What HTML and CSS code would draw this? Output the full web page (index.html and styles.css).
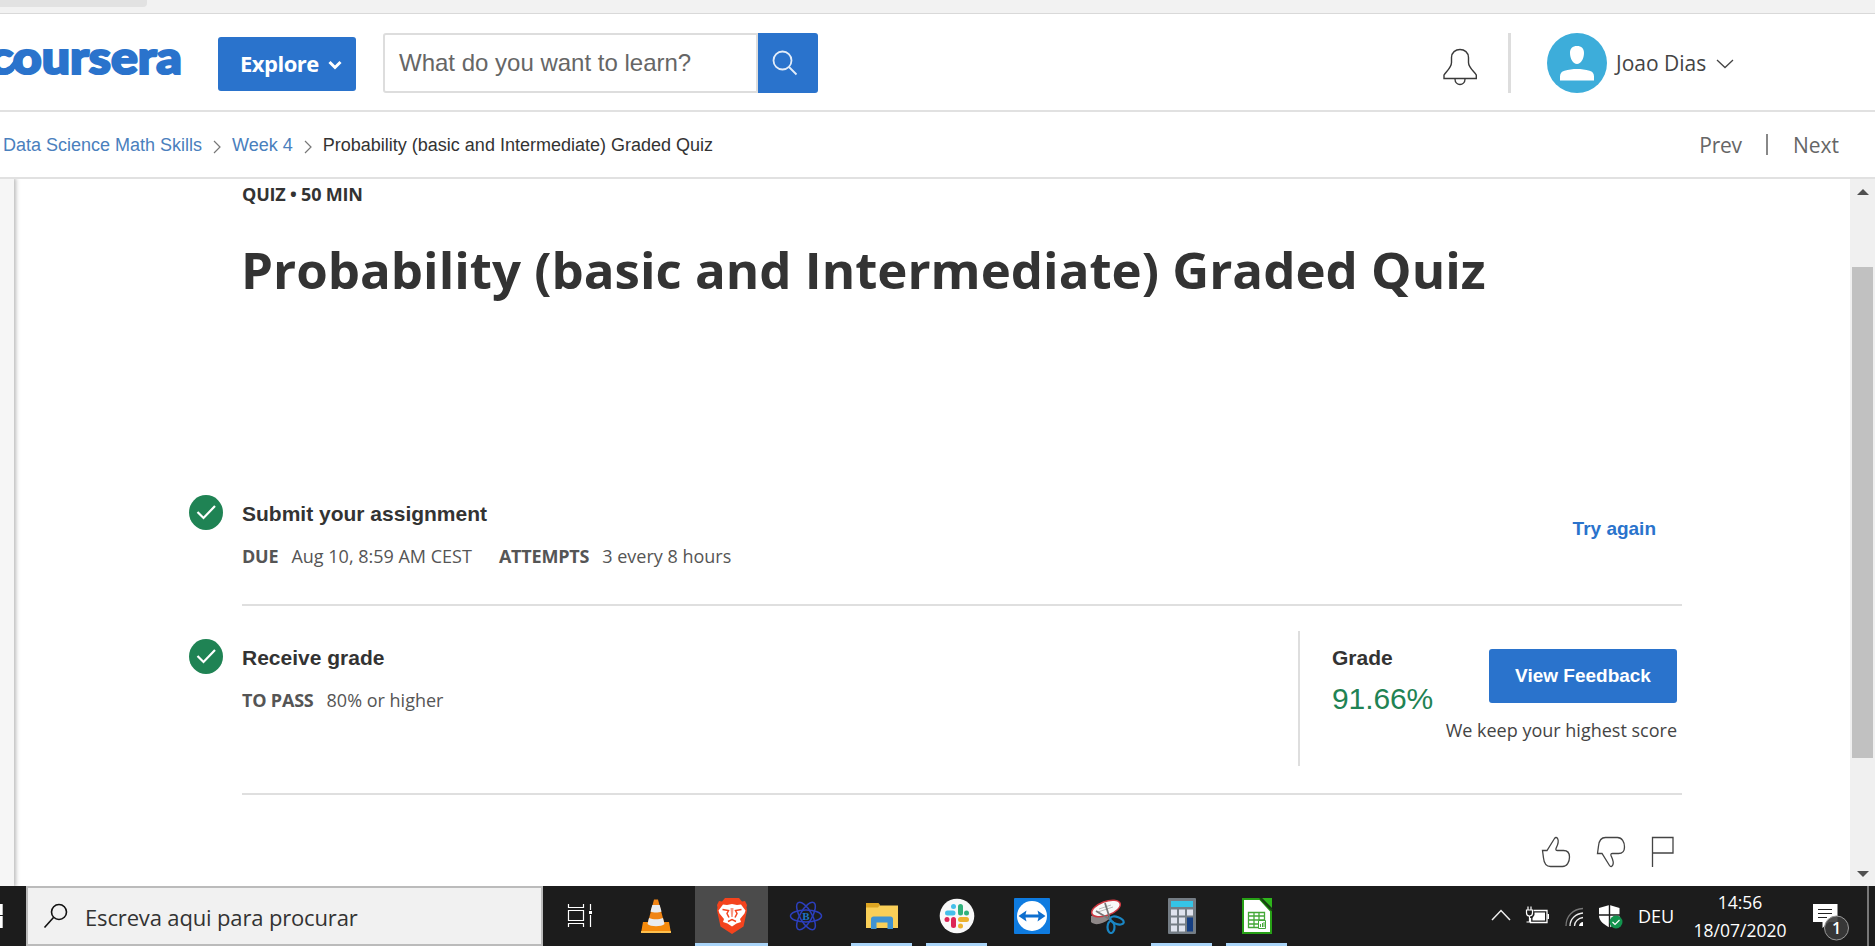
FILE: index.html
```html
<!DOCTYPE html>
<html lang="en">
<head>
<meta charset="utf-8">
<title>Probability (basic and Intermediate) Graded Quiz</title>
<link rel="stylesheet" href="styles.css">
</head>
<body>
<div class="screen">
  <div class="tabstrip"><div class="tab"></div></div>

  <header class="header">
    <svg class="logo" width="182" height="40" viewBox="0 0 182 40">
      <text class="logo-text" x="-11" y="32" textLength="193" lengthAdjust="spacingAndGlyphs">coursera</text>
      <path d="M6 30C14 28 18 13 28 9.500" fill="none" stroke="#2a73cc" stroke-width="6"/>
    </svg>
    <button class="explore">Explore
      <svg width="14" height="10" viewBox="0 0 14 10"><path d="M1.500 2l5.500 5.500L12.500 2" fill="none" stroke="#fff" stroke-width="3"/></svg>
    </button>
    <div class="search">
      <div class="search-field">What do you want to learn?</div>
      <div class="search-button">
        <svg width="26" height="26" viewBox="0 0 26 26" fill="none" stroke="#e3edf9" stroke-width="1.800"><circle cx="10.500" cy="10.500" r="9"/><path d="M17 17l7.500 7.500"/></svg>
      </div>
    </div>
    <svg class="bell" width="36" height="38" viewBox="0 0 36 38" fill="none" stroke="#3a3a3a" stroke-width="1.400"><path d="M2 30.500V27c1.500-3 7.500-7 7.500-12.500V9.500c0-5 4-8 8.500-8s8.500 3 8.500 8v5C26.500 20 33 24 34.300 27v3.500z"/><path d="M13 31c0 3.500 2.500 5.500 5 5.500s5-2 5-5.500"/></svg>
    <div class="header-rule"></div>
    <svg class="avatar" width="60" height="60" viewBox="0 0 60 60"><circle cx="30" cy="30" r="30" fill="#3dadda"/><path d="M30 13c4.500 0 7 2.200 7 7 0 5.500-3 11-7 11s-7-5.500-7-11c0-4.800 2.500-7 7-7zM13 47.500v-4c0-3 1.500-5 4.500-5.800 8-2.200 17-2.200 25 0 3 .8 4.500 2.800 4.500 5.800v4z" fill="#fff"/></svg>
    <span class="user-name">Joao Dias</span>
    <svg class="user-caret" width="18" height="10" viewBox="0 0 18 10"><path d="M1 1l8 7.500L17 1" fill="none" stroke="#444" stroke-width="1.300"/></svg>
  </header>

  <nav class="crumbs">
    <a class="crumb">Data Science Math Skills</a>
    <svg class="sep" width="8" height="14" viewBox="0 0 8 14"><path d="M1 1l6 6-6 6" fill="none" stroke="#777" stroke-width="1.200"/></svg>
    <a class="crumb">Week 4</a>
    <svg class="sep" width="8" height="14" viewBox="0 0 8 14"><path d="M1 1l6 6-6 6" fill="none" stroke="#777" stroke-width="1.200"/></svg>
    <span class="crumb crumb-current">Probability (basic and Intermediate) Graded Quiz</span>
    <div class="pager"><span class="prev">Prev</span><i class="pager-rule"></i><span>Next</span></div>
  </nav>

  <div class="body">
    <aside class="rail"></aside>
    <main class="content">
      <div class="kicker">QUIZ • 50 MIN</div>
      <h1 class="title">Probability (basic and Intermediate) Graded Quiz</h1>

      <section class="step step-submit">
        <svg class="check" width="34" height="35" viewBox="0 0 34 35"><ellipse cx="17" cy="17.500" rx="17" ry="17.500" fill="#1f8354"/><path d="M8.500 17l6 6L26 11" fill="none" stroke="#fff" stroke-width="2.200"/></svg>
        <div class="step-body">
          <div class="step-text">
            <h2 class="step-title step-title-submit">Submit your assignment</h2>
            <div class="meta"><b class="due">DUE</b><span class="due-date">Aug 10, 8:59 AM CEST</span><b class="attempts">ATTEMPTS</b><span>3 every 8 hours</span></div>
          </div>
          <a class="try-again">Try again</a>
        </div>
      </section>

      <section class="step step-grade">
        <svg class="check" width="34" height="35" viewBox="0 0 34 35"><ellipse cx="17" cy="17.500" rx="17" ry="17.500" fill="#1f8354"/><path d="M8.500 17l6 6L26 11" fill="none" stroke="#fff" stroke-width="2.200"/></svg>
        <div class="step-body">
          <div class="step-text">
            <h2 class="step-title">Receive grade</h2>
            <div class="meta"><b class="to-pass">TO PASS</b><span>80% or higher</span></div>
          </div>
          <div class="grade">
            <div class="grade-score"><div class="grade-label">Grade</div><div class="grade-value">91.66%</div></div>
            <div class="grade-action"><button class="feedback">View Feedback</button><div class="note">We keep your highest score</div></div>
          </div>
        </div>
      </section>

      <div class="reactions">
        <svg width="30" height="32" viewBox="0 0 30 32"><path d="M1.500 14.500H6L13.500 2.500C14.500 1 16 1.200 16.800 3c1.500 3.500-1 7.500-1.800 9.500-.4 1.500.2 2 1.500 2h6c4 0 6 2.500 6 6.500 0 5-2.500 9.500-7 9.500H9.500C4.500 30.500 3 27 2.500 22z"/></svg>
        <svg width="30" height="32" viewBox="0 0 30 32"><path d="M1.500 17.500H6L13.500 29.500c1 1.500 2.500 1.300 3.300-.5 1.500-3.500-1-7.500-1.800-9.500-.4-1.500.2-2 1.500-2h6c4 0 6-2.500 6-6.500 0-5-2.500-9.500-7-9.500H9.500C4.500 1.500 3 5 2.500 10z"/></svg>
        <svg width="24" height="32" viewBox="0 0 24 32"><path d="M1.500 31V1.500h20.500V17H1.500"/></svg>
      </div>
    </main>
    <div class="scrollbar">
      <i class="arrow-up"></i><div class="thumb"></div><i class="arrow-down"></i>
    </div>
  </div>

  <footer class="taskbar">
    <svg class="start" width="25" height="60" viewBox="0 0 25 60"><path d="M0 18h2.700v11H0zM0 30h2.700v12H0z" fill="#fff"/></svg>
    <div class="task-search">
      <svg width="26" height="26" viewBox="0 0 26 26" fill="none" stroke="#111" stroke-width="1.600"><circle cx="16" cy="9" r="7.500"/><path d="M10.500 14.500L1.500 24.500"/></svg>
      <span>Escreva aqui para procurar</span>
    </div>
    <div class="apps">
      <div class="app app-view"><svg width="36" height="36" viewBox="0 0 36 36"><path d="M6.500 6v3.500h15V6M6.500 29v-3.500h15V29M6.500 12.500h15v10h-15zM28.500 6v6M28.500 17v12" fill="none" stroke="#fff" stroke-width="1.200"/><path d="M27 13h3v3h-3z" fill="#fff"/></svg></div>
      <div class="app app-player"><svg width="36" height="36" viewBox="0 0 36 36"><path d="M5 24h26l2 11H3z" fill="#f58a0b"/><path d="M3 33h30v2H3z" fill="#ffc04d"/><path d="M16 1.500h4L26.500 26c-3 3-14 3-17 0z" fill="#f08414"/><path d="M14.300 7h7.400l1.800 6.500c-3 1.300-8 1.300-11 0zM11 20c4 1.800 10 1.800 14 0l1.500 6c-3 3-14 3-17 0z" fill="#e9ebee"/></svg></div>
      <div class="app active"><svg width="36" height="36" viewBox="0 0 36 36"><path d="M11 0h14l3 3.500 3-.5 2 4-.5 2.500.5 3-3.500 16L18 36 6.500 28.500 3 12.500l.5-3L3 7l2-4 3 .5z" fill="#f4431d"/><path d="M9 6.500l4 .5 5-1 5 1 4-.5 4.500 6-1 3-4.500 5.500 1 3-4.500 1.500L18 28.500 13.500 25.500 9 24l1-3L5.500 15.500l-1-3z" fill="#fff"/><path d="M8.500 11.500l6 1-1.500 3 2 4M27.500 11.500l-6 1 1.500 3-2 4M14 23.500l4-2 4 2" fill="none" stroke="#f4431d" stroke-width="1.500"/><path d="M16.500 10h3l-.7 9h-1.600z" fill="#f4431d" opacity=".55"/></svg></div>
      <div class="app app-atom"><svg width="36" height="36" viewBox="0 0 36 36" fill="none" stroke="#2c3fbd" stroke-width="1.500"><ellipse cx="18" cy="18" rx="15.500" ry="6"/><ellipse cx="18" cy="18" rx="15.500" ry="6" transform="rotate(60 18 18)"/><ellipse cx="18" cy="18" rx="15.500" ry="6" transform="rotate(120 18 18)"/><text class="atom-letter" x="18" y="22" text-anchor="middle">B</text></svg></div>
      <div class="app open"><svg width="36" height="36" viewBox="0 0 36 36"><path d="M2 5.500h12l2 2H34v22.500H2z" fill="#f9cf58"/><path d="M2 5h12.500L16 7l-2 2.500H2z" fill="#dda522"/><path d="M7 31V21c0-1.500 1-2.500 2.500-2.500h17c1.500 0 2.500 1 2.500 2.500v10h-5.500v-6.500h-11V31z" fill="#3f93d2"/></svg></div>
      <div class="app open"><svg width="36" height="36" viewBox="0 0 36 36"><circle cx="18" cy="18" r="17.300" fill="#f8f8f8"/><g stroke-width="5" stroke-linecap="round"><path d="M8.500 15H14" stroke="#45bfea"/><path d="M21.500 8.500V15" stroke="#30b27c"/><path d="M21.500 21.500H27.500" stroke="#ecb22e"/><path d="M14.500 21.500v6" stroke="#dd2556"/></g><circle cx="14.500" cy="8.500" r="2.500" fill="#45bfea"/><circle cx="27.500" cy="15" r="2.500" fill="#30b27c"/><circle cx="21.500" cy="28" r="2.500" fill="#ecb22e"/><circle cx="8" cy="21.500" r="2.500" fill="#dd2556"/></svg></div>
      <div class="app"><svg width="36" height="36" viewBox="0 0 36 36"><rect width="36" height="36" rx="1" fill="#0e7be0"/><circle cx="18" cy="18" r="15" fill="#fff"/><path d="M4.500 18l8-5.500-1 4h13l-1-4 8 5.500-8 5.500 1-4h-13l1 4z" fill="#0e6fcf"/></svg></div>
      <div class="app"><svg width="36" height="36" viewBox="0 0 36 36"><path d="M2 18v6c4 4 12 2 18-3l-2-7z" fill="#8e8888"/><ellipse cx="17" cy="10.500" rx="15" ry="7" transform="rotate(-20 17 10.500)" fill="#f8f8f8" stroke="#ce3841" stroke-width="1.500"/><path d="M10 11l12-4M9 14l15-5" stroke="#bbb"/><path d="M16 5l5 16M7 13l15 9" stroke="#777" stroke-width="1.800"/><g fill="none" stroke="#1a86c4" stroke-width="2.200"><ellipse cx="28" cy="22.500" rx="7" ry="3.500" transform="rotate(20 28 22.500)"/><ellipse cx="22" cy="29" rx="3.500" ry="6"/></g></svg></div>
      <div class="app open"><svg width="36" height="36" viewBox="0 0 36 36"><rect x="4" width="28" height="36" rx="1" fill="#747d85"/><path d="M7 3h22v6H7z" fill="#35c4e6"/><path d="M7 11.500h6v6H7zM15 11.500h6v6h-6zM23 11.500h6v6h-6zM7 19.500h6v6H7zM15 19.500h6v6h-6zM7 27.500h6v6H7zM15 27.500h6v6h-6z" fill="#dfe3ee"/><path d="M23 19.500h6v14h-6z" fill="#153f83"/></svg></div>
      <div class="app open"><svg width="36" height="36" viewBox="0 0 36 36"><path d="M4 1h17l11 12v22H4z" fill="#fff" stroke="#27a016" stroke-width="2"/><path d="M23 0h10v10z" fill="#2eb51b"/><path d="M21 0l12 12.500" stroke="#154d0d" stroke-width="2"/><path d="M9.500 14.500h16v15h-16zM9.500 18h16M9.500 22h16M9.500 26h16M15 14.500v15M20 14.500v15" fill="none" stroke="#43a736" stroke-width="1.300"/><path d="M19.500 22.500h7v8h-7z" fill="#fff" stroke="#43a736"/><path d="M21.500 29v-3M23.500 29v-4M25 29v-5" stroke="#43a736"/></svg></div>
    </div>
    <div class="tray">
      <svg class="tray-up" width="20" height="12" viewBox="0 0 20 12"><path d="M1 11l9-9.500L19 11" fill="none" stroke="#eee" stroke-width="1.500"/></svg>
      <svg class="tray-power" width="25" height="20" viewBox="0 0 25 20"><path d="M8.500 4.500H22v12H5.500V12" fill="none" stroke="#fff" stroke-width="1.300"/><path d="M9.500 6.500h10.500v8H7.500V12l2-3zM22.500 8H24v5h-1.500z" fill="#fff"/><path d="M1.500 4h6v3c0 2-1 3-3 3s-3-1-3-3zM3 4V.5M6 4V.5M4.500 10v6h-3" fill="#1c1c1c" stroke="#fff" stroke-width="1.200"/></svg>
      <svg class="tray-net" width="20" height="20" viewBox="0 0 20 20" fill="none" stroke="#eee" stroke-width="1.300"><path d="M1 19C1 9 8 2 18 1.500" stroke="#777"/><path d="M5 19C5 12 11 6.500 18 6"/><path d="M9.500 19c0-4.500 4-8 8.500-8.500"/><path d="M14 19c0-2 2-4 4-4v4z" fill="#fff" stroke="none"/></svg>
      <svg class="tray-shield" width="25" height="25" viewBox="0 0 25 25"><path d="M11.500 1l10 3v8c0 5-5 9-10 11.500C6.500 21 1 17 1 12V4z" fill="#fff"/><path d="M11.500 0v24M1 11h21" stroke="#1c1c1c" stroke-width="1.400"/><circle cx="18" cy="18" r="6.500" fill="#12944e"/><path d="M14.500 18l2.500 2.500 4.500-4.500" fill="none" stroke="#fff" stroke-width="1.200"/></svg>
      <span class="lang">DEU</span>
      <div class="clock"><span class="time">14:56</span><span class="date">18/07/2020</span></div>
      <svg class="notify" width="38" height="38" viewBox="0 0 38 38"><path d="M1 1h24.500v18H17l-6.500 6v-6H1z" fill="#fff"/><path d="M6 6.500h14M6 10.500h14M6 14.500h9" stroke="#222" stroke-width="1.200"/><circle cx="24.500" cy="25" r="12" fill="#3b3b3b" fill-opacity=".9" stroke="#999" stroke-width="1"/><text class="badge" x="24.500" y="31" text-anchor="middle">1</text></svg>
      <i class="peek"></i>
    </div>
  </footer>
</div>
</body>
</html>
```
FILE: styles.css
```css
* { box-sizing: border-box; }
body { margin: 0; background: #fff; font-family: "Open Sans", sans-serif; color: #333; }
svg { display: block; flex: none; }
h1, h2 { margin: 0; }
button { border: 0; padding: 0; background: #2a73cc; color: #fff; border-radius: 3px; }
.screen { width: 1875px; height: 946px; overflow: hidden; display: flex; flex-direction: column; white-space: nowrap; }

.tabstrip { height: 14px; flex: none; background: #f2f2f2; border-bottom: 1px solid #d9d9d9; }
.tab { width: 147px; height: 7px; background: #e2e2e2; border-radius: 0 0 4px 0; }

.header { height: 98px; flex: none; display: flex; align-items: center; border-bottom: 2px solid #e1e1e1; }
.logo { margin-top: 0; overflow: hidden; }
.logo-text { font: 900 46px Lato, sans-serif; fill: #2a73cc; stroke: #2a73cc; stroke-width: 2.2; }
.explore { width: 138px; height: 54px; margin: 4px 0 0 36px; display: flex; align-items: center; gap: 9px; padding: 0 0 2px 22px; font: 700 22px "Open Sans", sans-serif; letter-spacing: -.5px; }
.explore svg { margin-top: 3px; }
.search { display: flex; width: 435px; height: 60px; margin: 2px 0 0 27px; }
.search-field { width: 375px; border: 2px solid #ddd; border-radius: 3px 0 0 3px; padding-left: 14px; font: 24px/56px "Liberation Sans", sans-serif; color: #666; }
.search-button { width: 60px; background: #2a73cc; border-radius: 0 3px 3px 0; padding: 17px 0 0 14px; }
.bell { margin: 10px 0 0 624px; }
.header-rule { width: 3px; height: 60px; margin: 2px 36px 0 30px; background: #ddd; }
.avatar { margin-top: 2px; }
.user-name { font-size: 21px; margin: 2px 10px 0 9px; color: #444; }
.user-caret { margin-top: 4px; }

.crumbs { height: 67px; flex: none; display: flex; align-items: center; border-bottom: 2px solid #e1e1e1; padding-left: 3px; }
.crumb { font: 18px/24px "Liberation Sans", sans-serif; color: #4a80bd; }
.crumb-current { color: #333; }
.sep { margin: 4px 11px 0; }
.pager { margin: 0 36px 0 auto; display: flex; align-items: center; font-size: 21px; color: #666; }
.prev { letter-spacing: -.2px; }
.pager-rule { width: 2px; height: 21px; background: #888; margin: 0 25px 0 24px; }

.body { height: 707px; flex: none; display: flex; }
.rail { width: 14px; background: #f6f6f6; box-shadow: 1px 0 4px 1px #bbb; clip-path: inset(0 -8px 0 0); }
.content { width: 1836px; padding-left: 175px; }
.kicker { margin: 3px 0 0 53px; font: 700 18px/24px "Open Sans", sans-serif; letter-spacing: -.2px; }
.title { margin: 33px 0 0 52px; font: 700 51px/60px "Open Sans", sans-serif; height: 60px; }
.step { display: grid; grid-template-columns: 53px 1440px; }
.step-submit { margin-top: 189px; }
.step-body { display: flex; border-bottom: 2px solid #dfdfdf; }
.check { margin-top: 7px; }
.step-submit .step-body { height: 118px; }
.step-title { font: 700 21px/28px "Liberation Sans", sans-serif; padding-top: 12px; }
.meta { font-size: 18px; line-height: 24px; margin-top: 16px; color: #555; display: flex; }
.meta b { font-weight: 700; letter-spacing: -.2px; margin-right: 13px; }
.due-date { margin-right: 27px; }
.try-again { margin: 29px 26px 0 auto; font: 700 19px/24px "Liberation Sans", sans-serif; color: #2a73cc; }
.step-grade .check { margin-top: 33px; }
.step-grade .step-body { height: 189px; }
.step-grade .step-title { padding-top: 38px; }
.grade { margin: 25px 5px 0 auto; width: 379px; height: 135px; border-left: 2px solid #dedede; display: flex; justify-content: space-between; padding-left: 32px; }
.grade-label { font: 700 21px/28px "Liberation Sans", sans-serif; margin-top: 13px; }
.grade-value { font: 30px/36px "Liberation Sans", sans-serif; letter-spacing: -.1px; color: #1f8354; margin-top: 9px; }
.grade-score { width: 100px; }
.grade-action { display: flex; flex-direction: column; align-items: flex-end; }
.feedback { width: 188px; height: 54px; flex: none; margin-top: 18px; font: 700 19px "Liberation Sans", sans-serif; padding-bottom: 1px; }
.note { font-size: 18px; line-height: 24px; margin-top: 15px; color: #444; }
.reactions { display: flex; justify-content: flex-end; gap: 25px; margin: 41px 175px 0 0; }
.reactions svg { fill: none; stroke: #444; stroke-width: 1.3; }

.scrollbar { width: 25px; background: #f0f0f0; display: flex; flex-direction: column; align-items: center; }
.arrow-up { border: 6px solid transparent; border-top: 0; border-bottom: 6px solid #505050; margin-top: 10px; }
.thumb { width: 21px; height: 491px; background: #c1c1c1; margin-top: 72px; }
.arrow-down { border: 6px solid transparent; border-bottom: 0; border-top: 6px solid #505050; margin-top: 113px; }

.taskbar { height: 60px; flex: none; background: #1c1c1c; display: flex; color: #fff; }
.start { margin-right: 1px; }
.task-search { width: 517px; border: 2px solid #bbb; background: #f1f1f1; color: #333; font-size: 22px; letter-spacing: -.15px; display: flex; align-items: center; gap: 16px; padding-left: 15px; }
.task-search span { padding-top: 2px; }
.apps { display: flex; }
.app { width: 75px; height: 60px; display: flex; justify-content: center; padding-top: 12px; }
.app-view { width: 73px; }
.app-player { width: 79px; }
.app-atom { width: 76px; }
.active { background: #4b4b4b; border-bottom: 3px solid #a9d4f8; width: 73px; }
.open { background: linear-gradient(#a9d4f8, #a9d4f8) center bottom / 61px 3px no-repeat; }
.atom-letter { font: 700 11px "Liberation Serif", serif; fill: #1d76c8; stroke: none; }
.tray { margin-left: auto; display: flex; align-items: flex-start; height: 60px; }
.tray-up { margin-top: 23px; }
.tray-power { margin: 20px 0 0 14px; }
.tray-net { margin: 21px 0 0 15px; }
.tray-shield { margin: 18px 0 0 13px; }
.lang { font-size: 18px; line-height: 24px; margin: 18px 0 0 15px; width: 36px; }
.clock { width: 94px; margin: 4px 0 0 19px; display: flex; flex-direction: column; align-items: center; font-size: 17.5px; line-height: 24px; gap: 4px; }
.notify { margin: 17px 0 0 25px; }
.badge { font: 600 16px "Open Sans", sans-serif; fill: #fff; }
.peek { width: 2px; height: 60px; background: #777; margin: 0 6px 0 17px; }
```
